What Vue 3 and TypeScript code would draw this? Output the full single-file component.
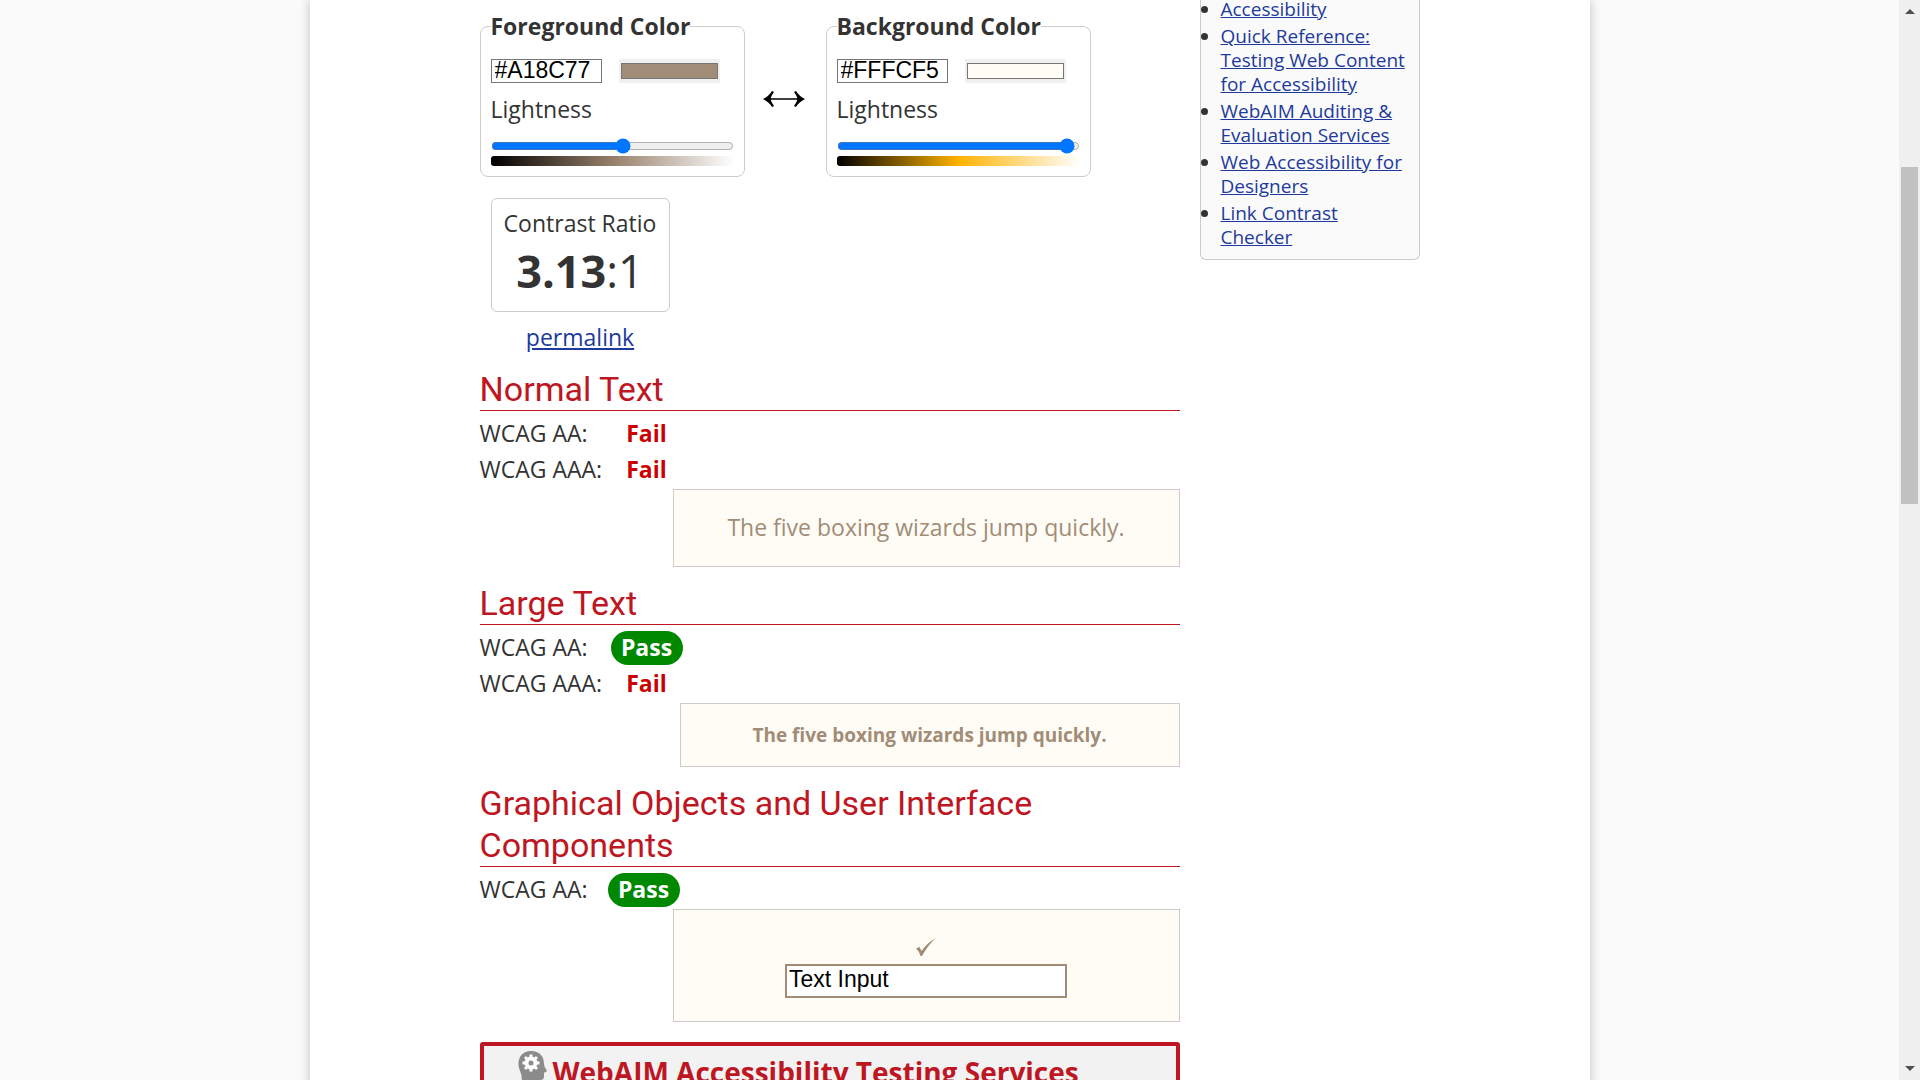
<script setup lang="ts">
import { reactive } from 'vue'

interface Picker {
  id: string
  title: string
  hex: string
  lightness: number
  pure: string
}

interface Result {
  level: string
  pass: boolean
}

interface Section {
  title: string
  kind: 'normal' | 'large' | 'objects'
  results: Result[]
}

const pickers = reactive<Picker[]>([
  { id: 'fg', title: 'Foreground Color', hex: '#A18C77', lightness: 55, pure: '#97806a' },
  { id: 'bg', title: 'Background Color', hex: '#FFFCF5', lightness: 98, pure: '#ffb300' },
])

const sections: Section[] = [
  {
    title: 'Normal Text',
    kind: 'normal',
    results: [
      { level: 'WCAG AA:', pass: false },
      { level: 'WCAG AAA:', pass: false },
    ],
  },
  {
    title: 'Large Text',
    kind: 'large',
    results: [
      { level: 'WCAG AA:', pass: true },
      { level: 'WCAG AAA:', pass: false },
    ],
  },
  {
    title: 'Graphical Objects and User Interface Components',
    kind: 'objects',
    results: [{ level: 'WCAG AA:', pass: true }],
  },
]

const resources: string[] = [
  'Accessibility',
  'Quick Reference: Testing Web Content for Accessibility',
  'WebAIM Auditing & Evaluation Services',
  'Web Accessibility for Designers',
  'Link Contrast Checker',
]

const sample = 'The five boxing wizards jump quickly.'
const sampleInput = 'Text Input'

function swap() {
  const [a, b] = pickers
  const keep = { hex: a.hex, lightness: a.lightness, pure: a.pure }
  Object.assign(a, { hex: b.hex, lightness: b.lightness, pure: b.pure })
  Object.assign(b, keep)
}
</script>

<template>
  <div class="window">
    <div class="viewport">
      <div class="page">
        <main class="main">
          <div class="pickers">
            <template v-for="(p, i) in pickers" :key="p.id">
              <button v-if="i === 1" class="swap" type="button" aria-label="Swap colors" @click="swap">
                <svg width="42" height="16" viewBox="0 0 42 16">
                  <path d="M3 8H39" stroke="#000" stroke-width="1.6" />
                  <path d="M0 8Q6 5 9 0L11 1Q8 5 7.500 8Q8 11 11 15L9 16Q6 11 0 8Z" />
                  <path d="M42 8Q36 5 33 0L31 1Q34 5 34.500 8Q34 11 31 15L33 16Q36 11 42 8Z" />
                </svg>
              </button>
              <fieldset class="picker">
                <legend>{{ p.title }}</legend>
                <div class="fields">
                  <input v-model="p.hex" class="hex" type="text" :aria-label="p.title + ' hex value'" />
                  <input class="swatch" type="color" :value="p.hex.toLowerCase()" :aria-label="p.title + ' picker'" />
                </div>
                <label class="light-label" :for="p.id + '-light'">Lightness</label>
                <input :id="p.id + '-light'" v-model.number="p.lightness" class="slider" type="range" min="0" max="100" />
                <div class="ramp" :style="{ backgroundImage: `linear-gradient(to right, #000, ${p.pure}, #fff)` }"></div>
              </fieldset>
            </template>
          </div>

          <div class="ratio">
            <div class="ratio-box">
              <div>Contrast Ratio</div>
              <div class="ratio-value"><b>3.13</b>:1</div>
            </div>
            <a class="permalink" href="#permalink">permalink</a>
          </div>

          <section v-for="s in sections" :key="s.kind" class="section" :class="s.kind">
            <h2>{{ s.title }}</h2>
            <div v-for="r in s.results" :key="r.level" class="result">
              <span class="level">{{ r.level }}</span>
              <span class="verdict"><b :class="r.pass ? 'pass' : 'fail'">{{ r.pass ? 'Pass' : 'Fail' }}</b></span>
            </div>
            <div class="sample">
              <template v-if="s.kind === 'objects'">
                <svg class="check" width="20" height="18" viewBox="0 0 20 18">
                  <path d="M0 10.500L3.500 9L5.500 13Q11 5 20 0Q12 7 6 18H4.500Q3 13 0 10.500Z" fill="#a18c77" />
                </svg>
                <input class="sample-input" type="text" :value="sampleInput" aria-label="Sample input" />
              </template>
              <template v-else>{{ sample }}</template>
            </div>
          </section>

          <div class="services">
            <svg class="head" width="29" height="34" viewBox="0 0 29 34">
              <path d="M13 0C21 0 26 5 26 13C26 16 29 19 29 20C29 21 26 21 26 22V26Q26 29 22 29L21 34H3Q5 26 2 20C-2 10 2 0 13 0Z" fill="#8b8b8b" />
              <g transform="translate(13 12)" stroke="#fff" fill="none">
                <circle r="4.500" stroke-width="4" />
                <path d="M0-8.500V-5M0 8.500V5M-8.500 0H-5M8.500 0H5M-6-6L-4-4M6-6L4-4M-6 6L-4 4M6 6L4 4" stroke-width="3" />
              </g>
            </svg>
            <h2>WebAIM Accessibility Testing Services</h2>
          </div>
        </main>

        <aside class="side">
          <ul>
            <li v-for="r in resources" :key="r"><a href="#resource">{{ r }}</a></li>
          </ul>
        </aside>
      </div>
    </div>

    <div class="scrollbar" aria-hidden="true">
      <i class="arrow up"></i>
      <div class="track">
        <span class="before"></span>
        <span class="thumb"></span>
        <span class="after"></span>
      </div>
      <i class="arrow down"></i>
    </div>
  </div>
</template>

<style>
body {
  background: #fafafa;
}
</style>

<style scoped>
.window {
  display: flex;
  height: 100vh;
  overflow: hidden;
  color: #333;
  font: 23px/36px "Open Sans", "Noto Sans", sans-serif;
}
.window * {
  box-sizing: border-box;
}
.viewport {
  flex: 1;
  min-width: 0;
  overflow: hidden;
}
.page {
  display: grid;
  grid-template-columns: minmax(0, 700px) 220px;
  justify-content: center;
  align-items: start;
  gap: 20px;
  max-width: 1280px;
  min-height: 100%;
  margin: 0 auto;
  background: #fff;
  box-shadow: 0 0 10px rgba(0, 20, 10, 0.25);
}
.main {
  padding-top: 8px;
}
a {
  color: #1e3a9c;
}

.pickers {
  display: flex;
  align-items: flex-end;
}
.picker {
  width: 265px;
  margin: 0;
  padding: 15px 10px 10px;
  border: 1px solid #ccc;
  border-radius: 8px;
}
legend {
  padding: 0;
  font-weight: 700;
}
.fields {
  display: flex;
  gap: 17px;
}
.hex {
  width: 111px;
  height: 24px;
  padding: 0 3px 2px;
  border: 1px solid #767676;
  color: #000;
  font: 23px/20px "Liberation Sans", Arial, sans-serif;
}
.swatch {
  width: 101px;
  height: 24px;
  padding: 0;
  border: 0;
  background: #f0f0f0;
}
.light-label {
  display: block;
  margin-top: 8px;
}
.slider {
  display: block;
  width: 100%;
  height: 16px;
  margin: 11px 0 2px;
}
.ramp {
  height: 10px;
  border-radius: 3px;
}
.swap {
  display: flex;
  justify-content: center;
  width: 81px;
  margin-bottom: 70px;
  padding: 0 2px 0 0;
  border: 0;
  background: none;
}

.ratio {
  width: 179px;
  margin: 21px 0 0 11px;
  text-align: center;
}
.ratio-box {
  padding: 7px 0 10px;
  border: 1px solid #ccc;
  border-radius: 6px;
  line-height: 35px;
}
.ratio-value {
  font-size: 45px;
  line-height: 60px;
}
.permalink {
  display: block;
  margin-top: 7px;
}

.section {
  margin-top: 15px;
}
h2 {
  margin: 0;
}
.section h2 {
  margin-bottom: 4px;
  border-bottom: 1px solid #be1622;
  color: #be1622;
  font: 400 34px/42px Roboto, sans-serif;
}
.ratio + .section {
  margin-top: 13px;
}
.result {
  display: flex;
}
.level {
  width: 131px;
}
.objects .level {
  width: 128px;
}
.verdict {
  width: 72px;
  text-align: center;
}
.fail {
  color: #c00;
}
.pass {
  display: block;
  height: 34px;
  border-radius: 17px;
  background: #080;
  color: #fff;
  line-height: 32px;
  margin-top: 2px;
}
.sample {
  display: flex;
  flex-direction: column;
  align-items: center;
  justify-content: center;
  height: 78px;
  margin: 2px 0 0 193px;
  padding-bottom: 2px;
  border: 1px solid #ccc;
  background: #fffcf5;
  color: #a18c77;
}
.large .sample {
  height: 64px;
  margin-left: 200px;
  padding-bottom: 0;
  font-size: 19px;
  font-weight: 700;
}
.objects .sample {
  height: 113px;
  gap: 8px;
  padding: 4px 0 0;
}
.sample-input {
  width: 282px;
  height: 34px;
  padding: 0 2px 2px;
  border: 2px solid #a18c77;
  color: #000;
  font: 23px/28px "Liberation Sans", Arial, sans-serif;
}

.services {
  display: flex;
  gap: 6px;
  height: 120px;
  margin-top: 20px;
  padding: 5px 34px;
  border: 4px solid #be1622;
  border-radius: 3px;
  background: #f2f2f2;
}
.services h2 {
  color: #be1622;
  font-size: 28px;
  line-height: 42px;
}

.side {
  margin-top: -3px;
  padding: 0 10px 10px 20px;
  border: 1px solid #ccc;
  border-top: 0;
  border-radius: 0 0 6px 6px;
  background: #fafafa;
  font-size: 19px;
  line-height: 24px;
}
.side ul {
  margin: 0;
  padding: 0;
}
.side li + li {
  margin-top: 3px;
}

.scrollbar {
  display: flex;
  flex-direction: column;
  align-items: center;
  width: 21px;
  padding: 9px 2px;
  background: #f0f0f0;
}
.arrow {
  border: 5px solid transparent;
}
.up {
  border-top: 0;
  border-bottom-color: #505050;
}
.down {
  border-bottom: 0;
  border-top-color: #505050;
}
.track {
  display: flex;
  flex: 1;
  flex-direction: column;
  width: 17px;
}
.before {
  flex: 153;
}
.thumb {
  flex: 337;
  background: #c1c1c1;
}
.after {
  flex: 562;
}
</style>
